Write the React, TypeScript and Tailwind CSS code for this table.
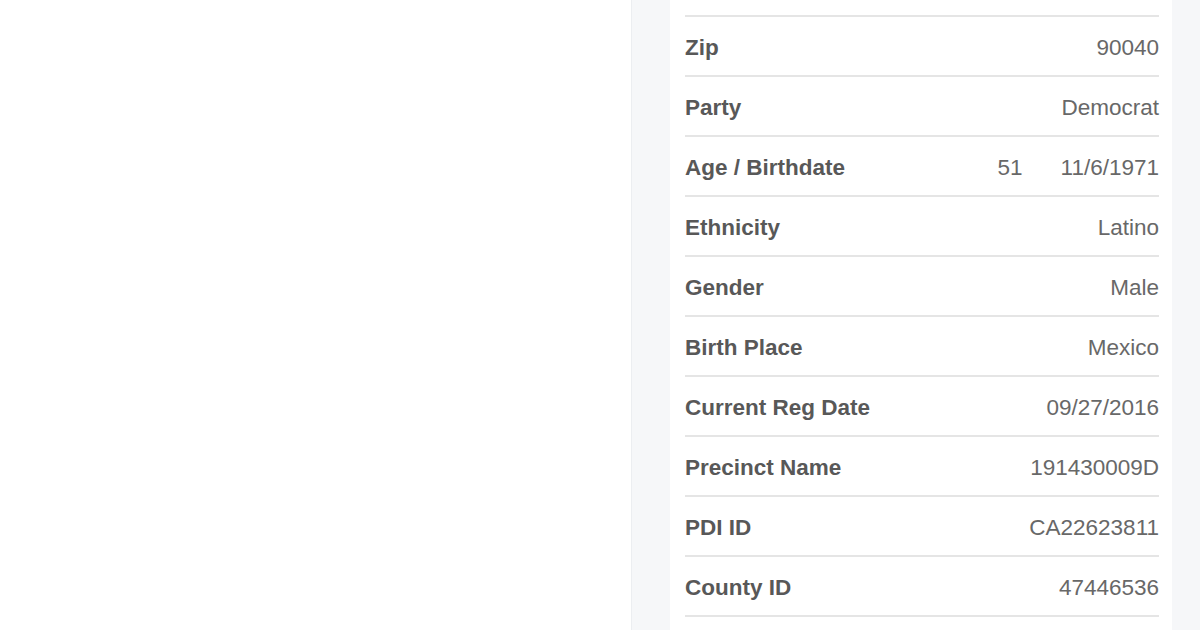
import React from 'react';

const rows: { label: string; value: React.ReactNode }[] = [
  { label: 'State', value: 'CA' },
  { label: 'Zip', value: '90040' },
  { label: 'Party', value: 'Democrat' },
  {
    label: 'Age / Birthdate',
    value: (
      <span className="flex items-center gap-[38px]">
        <span>51</span>
        <span>11/6/1971</span>
      </span>
    ),
  },
  { label: 'Ethnicity', value: 'Latino' },
  { label: 'Gender', value: 'Male' },
  { label: 'Birth Place', value: 'Mexico' },
  { label: 'Current Reg Date', value: '09/27/2016' },
  { label: 'Precinct Name', value: '191430009D' },
  { label: 'PDI ID', value: 'CA22623811' },
  { label: 'County ID', value: '47446536' },
  { label: 'Mail Ballot', value: 'Yes' },
];

export default function App() {
  return (
    <div className="flex h-[630px] w-[1200px] overflow-hidden bg-white font-['Liberation_Sans',Arial,sans-serif]">
      <div className="flex-1" />
      <div className="w-[569px] shrink-0 border-l border-[#eceef1] bg-[#f6f7f9] pl-[38px] pr-[28px]">
        <div className="-mt-[43px] bg-white pl-[15px] pr-[13px]">
          {rows.map((row) => (
            <div
              key={row.label}
              className="flex h-[60px] items-center justify-between border-b-2 border-[#e5e5e5] pt-[4px] text-[22.5px]"
            >
              <span className="font-bold text-[#585858]">{row.label}</span>
              <span className="text-[#686868]">{row.value}</span>
            </div>
          ))}
        </div>
      </div>
    </div>
  );
}
